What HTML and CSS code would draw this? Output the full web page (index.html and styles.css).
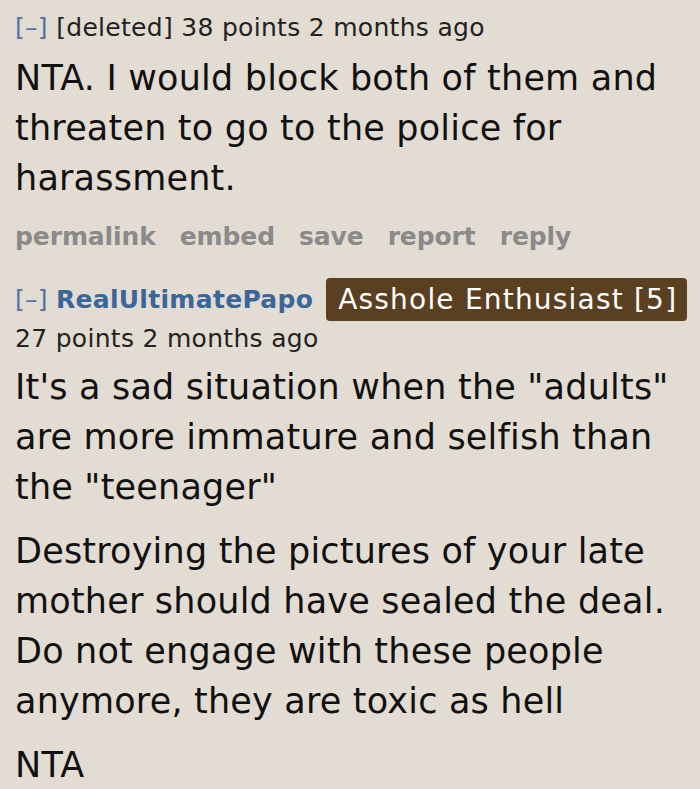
FILE: index.html
```html
<!DOCTYPE html>
<html>
<head>
<meta charset="utf-8">
<link rel="stylesheet" href="styles.css">
</head>
<body>
<div class="thread">
  <div class="comment">
    <div class="tagline">
      <span class="expand">[–]</span> <span class="author-deleted">[deleted]</span> <span class="score">38 points</span> <span class="time">2 months ago</span>
    </div>
    <div class="md">
      <p>NTA. I would block both of them and threaten to go to the police for harassment.</p>
    </div>
    <ul class="buttons">
      <li>permalink</li>
      <li>embed</li>
      <li>save</li>
      <li>report</li>
      <li>reply</li>
    </ul>
  </div>
  <div class="comment second">
    <div class="tagline tagline-top">
      <span class="expand">[–]</span> <span class="author">RealUltimatePapo</span><span class="flair">Asshole Enthusiast [5]</span>
    </div>
    <div class="tagline">
      <span class="score">27 points</span> <span class="time">2 months ago</span>
    </div>
    <div class="md">
      <p>It's a sad situation when the "adults" are more immature and selfish than the "teenager"</p>
      <p>Destroying the pictures of your late mother should have sealed the deal. Do not engage with these people anymore, they are toxic as hell</p>
      <p>NTA</p>
    </div>
  </div>
</div>
</body>
</html>
```
FILE: styles.css
```css
html, body {
  margin: 0;
  padding: 0;
  background: #e3dcd3;
}
body {
  font-family: "DejaVu Sans", "Liberation Sans", sans-serif;
  color: #111;
}
.thread {
  padding: 10px 15px 0 15px;
}
.tagline {
  font-size: 25px;
  line-height: 36px;
  color: #222;
  white-space: nowrap;
  letter-spacing: 0.3px;
}
.expand {
  color: #4a76a8;
}
.author {
  color: #3a6699;
  font-weight: bold;
  letter-spacing: 0.3px;
}
.tagline-top {
  display: flex;
  align-items: center;
  gap: 8px;
  height: 43px;
}
.flair {
  background: #5a4020;
  color: #fff;
  font-size: 28px;
  line-height: 43px;
  letter-spacing: 1.2px;
  padding: 0 10px 0 12px;
  border-radius: 4px;
  margin-left: 5px;
}
.md {
  font-size: 35px;
  line-height: 50px;
  letter-spacing: 0.2px;
  margin-top: 7px;
}
.second .md {
  margin-top: 5px;
}
.md p {
  margin: 0;
}
.md p + p {
  margin-top: 14px;
}
.buttons {
  list-style: none;
  margin: 16px 0 0 0;
  padding: 0;
  display: flex;
  gap: 24px;
  font-size: 25px;
  font-weight: bold;
  color: #8a8a8a;
  line-height: 36px;
  letter-spacing: -0.1px;
}
.second {
  margin-top: 23px;
}
```
